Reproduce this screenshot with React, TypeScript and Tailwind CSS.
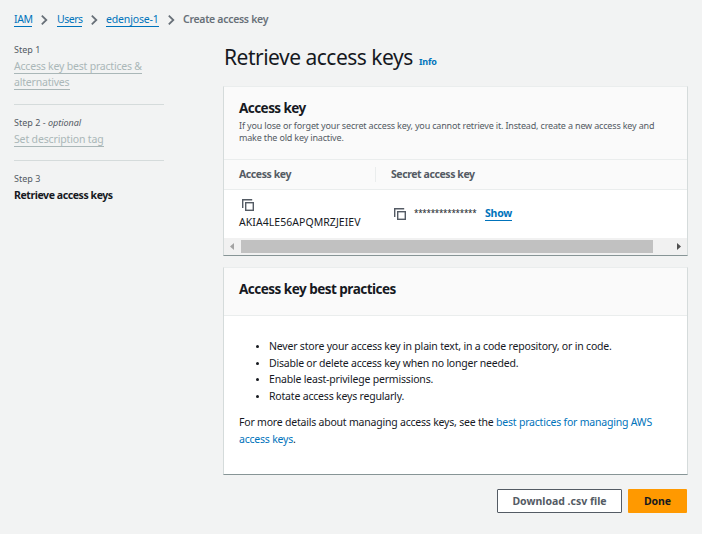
import type { ReactNode } from "react";

function Chevron() {
  return (
    <svg width="7" height="10" viewBox="0 0 7 10" fill="none" stroke="#687078" strokeWidth="1.8" className="-mr-px mt-[15px] shrink-0">
      <path d="M0.8 0.7 L5.3 5 L0.8 9.3" />
    </svg>
  );
}

function CopyIcon() {
  return (
    <svg width="12" height="12" viewBox="0 0 12 12" fill="none" stroke="#545b64" strokeWidth="1.4" className="shrink-0">
      <path d="M0.7 9V0.7H10.2" />
      <rect x="3.7" y="3.7" width="7.6" height="7.6" />
    </svg>
  );
}

function Crumb({ children, className }: { children: ReactNode; className: string }) {
  return (
    <a className={"mt-[13px] block h-[14px] border-b border-[#0073bb] text-[10.5px] leading-[13px] text-[#0073bb] " + className}>
      {children}
    </a>
  );
}

function Card({ children, className }: { children: ReactNode; className: string }) {
  return (
    <section className={"w-[465px] border border-t-[#eaeded] border-r-[#d5dbdb] border-b-[#879596] border-l-[#d5dbdb] bg-white " + className}>
      {children}
    </section>
  );
}

export default function App() {
  return (
    <div className="h-[534px] w-[702px] overflow-hidden whitespace-nowrap bg-[#f2f3f3] font-['Noto_Sans',sans-serif] text-[10.5px] text-[#16191f]">
      <nav className="flex h-[36px] items-start pl-[14px]">
        <Crumb className="w-[18px] tracking-[-0.4px]">IAM</Crumb>
        <div className="ml-[9px] mr-[10px] flex"><Chevron /></div>
        <Crumb className="w-[25px] tracking-[-0.5px]">Users</Crumb>
        <div className="ml-[9px] mr-[9px] flex"><Chevron /></div>
        <Crumb className="w-[53px] tracking-[-0.15px]">edenjose-1</Crumb>
        <div className="ml-[9px] mr-[9px] flex"><Chevron /></div>
        <span className="mt-[13px] font-semibold leading-[13px] tracking-[-0.3px] text-[#687078]">Create access key</span>
      </nav>
      <div className="flex">
        <aside className="ml-[14px] w-[150px] shrink-0">
          <div className="h-[69px] border-b border-[#d5dbdb] pt-[7px]">
            <div className="h-[16px] text-[9px] leading-[14px] text-[#545b64]">Step 1</div>
            <a className="block h-[15px] w-[128px] border-b border-[#aab7b8] leading-[14px] tracking-[-0.2px] text-[#aab7b8]">Access key best practices &amp;</a>
            <a className="mt-px block h-[15px] w-[56px] border-b border-[#aab7b8] leading-[14px] tracking-[-0.2px] text-[#aab7b8]">alternatives</a>
          </div>
          <div className="h-[56px] border-b border-[#d5dbdb] pt-[11px]">
            <div className="h-[16px] text-[9px] leading-[14px] text-[#545b64]">Step 2 - <i>optional</i></div>
            <a className="block h-[15px] w-[90px] border-b border-[#aab7b8] leading-[14px] tracking-[-0.15px] text-[#aab7b8]">Set description tag</a>
          </div>
          <div className="pt-[11px]">
            <div className="h-[16px] text-[9px] leading-[14px] text-[#545b64]">Step 3</div>
            <div className="font-bold leading-[15px] tracking-[-0.42px]">Retrieve access keys</div>
          </div>
        </aside>
        <main className="ml-[59px] w-[465px] shrink-0">
          <div className="flex h-[50px] items-baseline pt-[6px]">
            <h1 className="w-[196px] pl-px text-[21px] leading-[30px] tracking-[-0.5px]">Retrieve access keys</h1>
            <a className="text-[9px] font-bold leading-[14px] tracking-[-0.2px] text-[#0073bb]">Info</a>
          </div>
          <Card className="h-[170px]">
            <div className="h-[73px] border-b border-[#eaeded] bg-[#fafafa] pl-[15px] pt-[12px]">
              <h2 className="text-[13.5px] font-bold leading-[18px] tracking-[-0.55px]">Access key</h2>
              <p className="mt-[3px] text-[9px] leading-[12px] tracking-[-0.17px] text-[#545b64]">
                If you lose or forget your secret access key, you cannot retrieve it. Instead, create a new access key and<br />
                make the old key inactive.
              </p>
            </div>
            <div className="flex h-[30px] items-center border-b border-[#eaeded] bg-[#fafafa] font-bold leading-[14px] tracking-[-0.42px] text-[#545b64]">
              <div className="w-[151px] pb-[2px] pl-[15px]">Access key</div>
              <div className="h-[15px] border-l border-[#eaeded] pl-[15px] leading-[15px]">Secret access key</div>
            </div>
            <div className="flex h-[48px]">
              <div className="w-[152px] pl-[15px] pt-[9px]">
                <div className="pl-[3px]"><CopyIcon /></div>
                <div className="mt-[4px] leading-[14px] tracking-[0.05px]">AKIA4LE56APQMRZJEIEV</div>
              </div>
              <div className="flex items-start pl-[18px] pt-[18px]">
                <CopyIcon />
                <span className="-mt-[2px] ml-[8px] w-[71px] text-[8px] leading-[14px] tracking-[-0.25px]">***************</span>
                <a className="-mt-[2px] block h-[15px] w-[27px] border-b border-[#0073bb] font-bold leading-[14px] tracking-[-0.2px] text-[#0073bb]">Show</a>
              </div>
            </div>
            <div className="flex h-[17px] items-center bg-[#f1f1f1]">
              <svg width="17" height="17" viewBox="0 0 17 17"><path d="M10 5v7L6 8.5z" fill="#a3a3a3" /></svg>
              <div className="h-[13px] w-[412px] bg-[#c1c1c1]" />
              <div className="flex-1" />
              <svg width="17" height="17" viewBox="0 0 17 17"><path d="M7 5v7l4-3.5z" fill="#505050" /></svg>
            </div>
          </Card>
          <Card className="mt-[11px] h-[208px]">
            <h2 className="h-[48px] border-b border-[#eaeded] bg-[#fafafa] pl-[15px] pt-[12px] text-[13.5px] font-bold leading-[18px] tracking-[-0.51px]">Access key best practices</h2>
            <ul className="list-disc pl-[45px] pt-[22px] leading-[16.5px] tracking-[-0.19px] marker:text-[8.5px]">
              <li>Never store your access key in plain text, in a code repository, or in code.</li>
              <li className="tracking-[-0.22px]">Disable or delete access key when no longer needed.</li>
              <li>Enable least-privilege permissions.</li>
              <li>Rotate access keys regularly.</li>
            </ul>
            <p className="mt-[10px] pl-[15px] leading-[16.5px] tracking-[-0.21px]">
              For more details about managing access keys, see the <a className="text-[#0073bb]">best practices for managing AWS<br />access keys</a>.
            </p>
          </Card>
          <div className="mt-[14px] flex justify-end gap-[6px] pr-px">
            <button className="h-[24px] w-[125px] rounded-[1px] border border-[#545b64] bg-white text-[10.5px] font-bold leading-[20px] tracking-[0px] text-[#545b64]">Download .csv file</button>
            <button className="h-[24px] w-[59px] rounded-[1px] bg-[#ff9900] text-[10.5px] font-bold leading-[22px] tracking-[-0.1px] text-[#16191f]">Done</button>
          </div>
        </main>
      </div>
    </div>
  );
}
